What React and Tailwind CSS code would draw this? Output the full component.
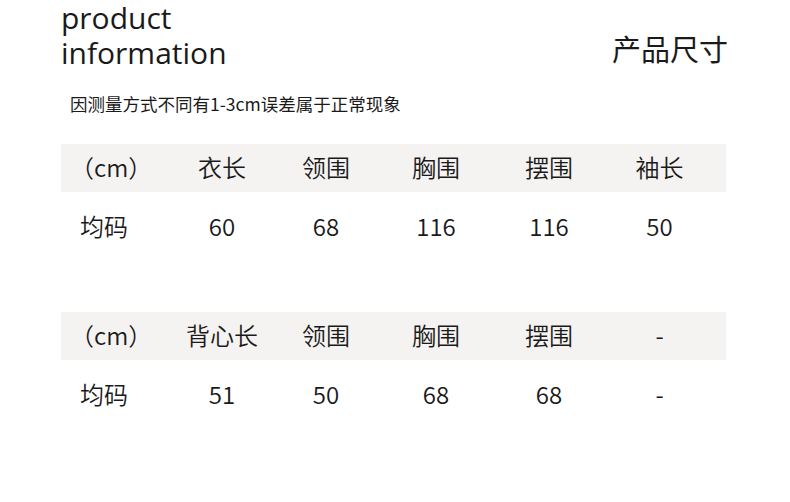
const COLS = 'grid grid-cols-[98px_126px_82px_138px_88px_133px] items-center'

const tables = [
  { head: ['衣长', '领围', '胸围', '摆围', '袖长'], row: ['60', '68', '116', '116', '50'] },
  { head: ['背心长', '领围', '胸围', '摆围', '-'], row: ['51', '50', '68', '68', '-'] },
]

function SizeTable({ head, row }) {
  return (
    <div className="w-[665px] font-[350]">
      <div className={`${COLS} h-[48px] bg-[#f4f3f1] pb-px text-[24px] leading-none`}>
        <div className="pl-[9px]">（cm）</div>
        {head.map((h, i) => (
          <div key={i} className="text-center">{h}</div>
        ))}
      </div>
      <div className={`${COLS} h-[72px] pb-[3px] text-[24px] leading-none`}>
        <div className="pl-[19px]">均码</div>
        {row.map((v, i) => (
          <div key={i} className="text-center">{v}</div>
        ))}
      </div>
    </div>
  )
}

export default function App() {
  return (
    <div className="h-[502px] w-[790px] overflow-hidden bg-white font-['Noto_Sans_CJK_SC','Noto_Sans',sans-serif] text-[#1a1a1a]">
      <div className="flex items-start justify-between pl-[61px] pr-[62px]">
        <div className="font-['Open_Sans',sans-serif] text-[30px]">
          <div className="h-[35px] leading-[35px]">product</div>
          <div className="h-[35px] leading-[35px]">information</div>
        </div>
        <div className="mt-[34px] text-[29px] leading-none">产品尺寸</div>
      </div>

      <p className="mt-[25px] pl-[70px] text-[17.5px] leading-none">因测量方式不同有1-3cm误差属于正常现象</p>

      <div className="mt-[31px] flex flex-col gap-[48px] pl-[61px]">
        {tables.map((t, i) => (
          <SizeTable key={i} {...t} />
        ))}
      </div>
    </div>
  )
}
